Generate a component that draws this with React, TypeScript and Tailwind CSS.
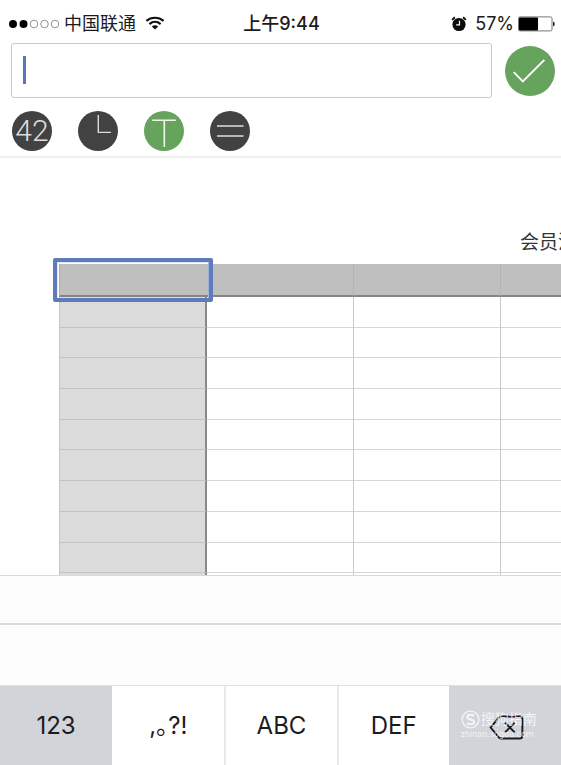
import React from 'react';

const rows = Array.from({ length: 10 }, (_, i) => i);
const columns = [1, 2, 3];

function StatusBar() {
  return (
    <header className="grid h-[43px] grid-cols-[1fr_auto_1fr] items-center pt-1 pr-[6px] pl-2 text-[18px] leading-6 text-[#1b1b1b]">
      <div className="flex items-center">
        <svg width="52" height="10" viewBox="0 0 52 10" aria-label="信号">
          <circle cx="5" cy="5" r="4" fill="#000" />
          <circle cx="15.5" cy="5" r="4" fill="#000" />
          <circle cx="26" cy="5" r="3.8" fill="none" stroke="#777" strokeWidth="0.8" />
          <circle cx="36.5" cy="5" r="3.8" fill="none" stroke="#777" strokeWidth="0.8" />
          <circle cx="47" cy="5" r="3.8" fill="none" stroke="#777" strokeWidth="0.8" />
        </svg>
        <span className="ml-1">中国联通</span>
        <svg className="ml-[9px]" width="20" height="15" viewBox="0 0 20 15" aria-label="无线网络">
          <g fill="none" stroke="#111" strokeWidth="2.2">
            <path d="M1.4 4.9C6.2.7 13.8.7 18.600 4.900" />
            <path d="M4.400 8.100c3.300-2.900 7.900-2.900 11.200 0" />
          </g>
          <path d="M6.800 10.500c2-1.700 4.400-1.700 6.400 0L10 13.600z" fill="#111" />
        </svg>
      </div>
      <time className="font-medium">上午9:44</time>
      <div className="flex items-center justify-end">
        <svg width="16" height="16" viewBox="0 0 16 16" aria-label="闹钟">
          <circle cx="8" cy="8.5" r="6.6" fill="#0b0b0b" />
          <path d="M1.2 4A8 8 0 0 1 4 1.400M14.800 4A8 8 0 0 0 12 1.400" fill="none" stroke="#111" strokeWidth="1.8" />
          <path d="M8.500 4.800v4H5.200" fill="none" stroke="#fff" strokeWidth="1.2" />
        </svg>
        <span className="ml-2">57%</span>
        <svg className="ml-1" width="37" height="16" viewBox="0 0 37 16" aria-label="电池">
          <rect x="0.5" y="0.9" width="33.5" height="14" rx="1.5" fill="#fff" stroke="#666" strokeWidth="0.9" />
          <rect x="1" y="1.4" width="19" height="13" rx="0.8" fill="#000" />
          <path d="M35 5.4c2.3.8 2.3 4.2 0 5z" fill="#222" />
        </svg>
      </div>
    </header>
  );
}

function Editor() {
  return (
    <form className="flex items-center gap-[13px] pr-[6px] pl-[11px]" onSubmit={(e) => e.preventDefault()}>
      <div className="relative min-w-0 flex-1">
        <input
          type="text"
          aria-label="单元格内容"
          className="block h-[55px] w-full rounded-[3px] border border-[#c9c9c9] bg-white px-3 text-2xl caret-transparent outline-none"
        />
        <span className="absolute top-[13px] left-3 h-7 w-[3px] bg-[#5875bd]" />
      </div>
      <button type="submit" aria-label="完成" className="size-[50px] shrink-0 rounded-full bg-[#66a35d]">
        <svg width="50" height="50" viewBox="0 0 50 50" fill="none" stroke="#fff" strokeWidth="1.9">
          <path d="M8.8 26.2 17.800 35.300 39.400 13.800" />
        </svg>
      </button>
    </form>
  );
}

function Tools() {
  return (
    <nav className="flex gap-[26px] border-b-2 border-[#f0f0f0] pt-[13px] pb-[5px] pl-3">
      <button type="button" className="flex size-10 items-center justify-center rounded-full bg-[#424242] font-['Roboto'] text-[30px] leading-10 font-light text-[#ddd]">
        42
      </button>
      <button type="button" aria-label="日期和时间" className="size-10 rounded-full bg-[#424242]">
        <svg width="40" height="40" viewBox="0 0 40 40" fill="none" stroke="#ddd" strokeWidth="1.4">
          <path d="M20.300 4v17.400h12.600" />
        </svg>
      </button>
      <button type="button" aria-label="文本" className="size-10 rounded-full bg-[#66a35d]">
        <svg width="40" height="40" viewBox="0 0 40 40" fill="none" stroke="#f2f7f0" strokeWidth="1.6">
          <path d="M8.200 9.200h23.600M20.300 9.200V36" />
        </svg>
      </button>
      <button type="button" aria-label="公式" className="size-10 rounded-full bg-[#424242]">
        <svg width="40" height="40" viewBox="0 0 40 40" fill="none" stroke="#ddd" strokeWidth="1.6">
          <path d="M7 15h26.600M7 25h26.600" />
        </svg>
      </button>
    </nav>
  );
}

function Sheet() {
  return (
    <main className="h-[417px] overflow-hidden bg-white pl-[59px]">
      <h1 className="pt-[72px] pb-2 pl-[461px] text-[19px] leading-[26px] whitespace-nowrap text-[#333]">会员消</h1>
      <table className="h-[340px] w-full min-w-[589px] table-fixed border-separate border-spacing-0">
        <thead>
          <tr>
            <th scope="col" className="relative h-[33px] w-[148px] border-b-2 border-l border-[#858585] border-l-[#aaa] bg-[#bfbfbf] p-0">
              <span className="absolute -top-[6px] -right-[6px] -bottom-[7px] -left-[7px] z-10 rounded-[2px] border-4 border-[#5f7bbb]">
                <span className="absolute inset-0 border border-b-0 border-[#dfe7f8] border-r-[#a3b3d8]" />
              </span>
            </th>
            {columns.map((c) => (
              <th key={c} scope="col" className="w-[147px] border-r border-b-2 border-[#858585] border-r-[#b2b2b2] bg-[#bfbfbf] p-0" />
            ))}
          </tr>
        </thead>
        <tbody>
          {rows.map((r) => (
            <tr key={r}>
              <th scope="row" className="border-r-2 border-b border-l border-[#c4c4c4] border-r-[#888] bg-[#dbdbdb] p-0" />
              {columns.map((c) => (
                <td key={c} className="border-r border-b border-[#d6d6d6] border-r-[#c8c8c8] p-0" />
              ))}
            </tr>
          ))}
        </tbody>
      </table>
    </main>
  );
}

function Watermark() {
  return (
    <span className="pointer-events-none absolute top-[23px] left-3 text-left whitespace-nowrap text-white/75">
      <span className="flex items-center gap-px text-[14px] leading-5">
        <svg width="19" height="19" viewBox="0 0 20 20" fill="none" stroke="currentColor">
          <circle cx="10" cy="10" r="8.8" strokeWidth="1.5" />
          <path d="M13.8 6.2C11.500 4.600 6.500 4.500 6.500 7.500s7.300 1.800 7.300 5-5.200 3-7.600 1.200" strokeWidth="2.300" />
        </svg>
        搜狗指南
      </span>
      <span className="block font-['DejaVu_Sans'] text-[8px] leading-3">zhinan.sogou.com</span>
    </span>
  );
}

function Keyboard() {
  return (
    <footer className="bg-[#fcfcfc]">
      <div className="h-12 border-t border-[#d9d9d9]" />
      <div className="h-[62px] border-t-2 border-[#d8dadb]" />
      <div className="grid h-20 grid-cols-5 border-t border-[#e0e0e2] text-[24px] text-[#1c1c1e]">
        <button type="button" className="bg-[#d2d4da]">123</button>
        <button type="button" className="bg-white">,｡?!</button>
        <button type="button" className="border-l-2 border-[#e9e9eb] bg-white">ABC</button>
        <button type="button" className="border-l-2 border-[#e9e9eb] bg-white">DEF</button>
        <button type="button" aria-label="删除" className="relative flex items-center justify-center bg-[#d2d4da] pt-[3px] pl-1">
          <svg width="35" height="25" viewBox="0 0 36 26" fill="none" stroke="#1c1c1e" strokeWidth="2">
            <path d="M12.500 1.500h19a3 3 0 0 1 3 3v17a3 3 0 0 1-3 3h-19q-1.500 0-2.500-1.200L1.500 13 10 2.700q1-1.200 2.500-1.200zM16.500 8l10 10M26.500 8l-10 10" />
          </svg>
          <Watermark />
        </button>
      </div>
    </footer>
  );
}

export default function App() {
  return (
    <div className="overflow-hidden bg-white font-['Inter','Noto_Sans_CJK_SC',sans-serif]">
      <StatusBar />
      <Editor />
      <Tools />
      <Sheet />
      <Keyboard />
    </div>
  );
}
